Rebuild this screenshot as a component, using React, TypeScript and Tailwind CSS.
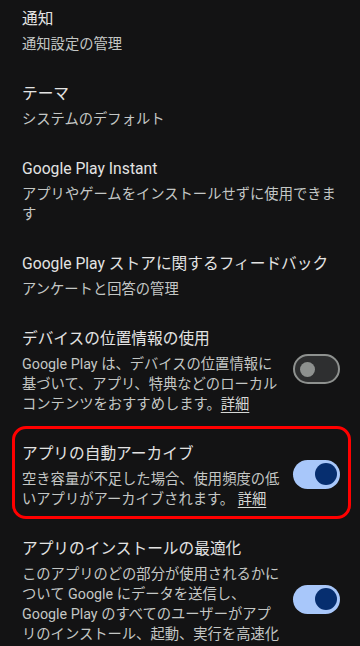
import React from "react";

interface SettingItem {
  title: string;
  subtitle: React.ReactNode;
  toggle?: "on" | "off";
  highlight?: boolean;
}

const FONT = { fontFamily: 'Roboto, "Noto Sans CJK JP", sans-serif' };

function Link({ children }: { children: React.ReactNode }) {
  return <span className="underline underline-offset-[3px] text-[#d6d8d6]">{children}</span>;
}

function Toggle({ on }: { on: boolean }) {
  if (on) {
    return (
      <div className="flex h-[29px] w-[47px] shrink-0 items-center justify-end rounded-full bg-[#a8c7fa] pr-[3px]">
        <div className="h-[22px] w-[22px] rounded-full bg-[#062e6f]" />
      </div>
    );
  }
  return (
    <div className="flex h-[30px] w-[47px] shrink-0 items-center rounded-full border-2 border-[#8e918f] bg-[#2e2f30] pl-[5px]">
      <div className="h-[15px] w-[15px] rounded-full bg-[#8e918f]" />
    </div>
  );
}

const ITEMS: SettingItem[] = [
  { title: "通知", subtitle: "通知設定の管理" },
  { title: "テーマ", subtitle: "システムのデフォルト" },
  { title: "Google Play Instant", subtitle: "アプリやゲームをインストールせずに使用できます" },
  { title: "Google Play ストアに関するフィードバック", subtitle: "アンケートと回答の管理" },
  {
    title: "デバイスの位置情報の使用",
    subtitle: (
      <>
        Google Play は、デバイスの位置情報に基づいて、アプリ、特典などのローカルコンテンツをおすすめします。<Link>詳細</Link>
      </>
    ),
    toggle: "off",
  },
  {
    title: "アプリの自動アーカイブ",
    subtitle: (
      <>
        空き容量が不足した場合、使用頻度の低いアプリがアーカイブされます。 <Link>詳細</Link>
      </>
    ),
    toggle: "on",
    highlight: true,
  },
  {
    title: "アプリのインストールの最適化",
    subtitle: (
      <>
        このアプリのどの部分が使用されるかについて Google にデータを送信し、Google Play のすべてのユーザーがアプリのインストール、起動、実行を高速化します。<Link>詳細</Link>
      </>
    ),
    toggle: "on",
  },
];

function Row({ item }: { item: SettingItem }) {
  return (
    <div className="relative flex items-center gap-3 pb-[14px] pl-[22px] pr-[20px] pt-[14px]">
      <div className="min-w-0 flex-1">
        <div className="text-[15.7px] leading-[24px] text-[#e3e3e3]">{item.title}</div>
        <div className="mt-[3px] text-[14.3px] leading-[20px] text-[#c4c7c5]">{item.subtitle}</div>
      </div>
      {item.toggle && (
        <div className="-mt-[3px]">
          <Toggle on={item.toggle === "on"} />
        </div>
      )}
      {item.highlight && (
        <div className="pointer-events-none absolute bottom-[4px] left-[12px] right-[9px] top-[-2px] rounded-[14px] border-[3px] border-[#ff0000]" />
      )}
    </div>
  );
}

export default function App() {
  return (
    <div className="h-[646px] w-[360px] overflow-hidden bg-[#131314]" style={FONT}>
      <div className="-mt-[7px]">
        {ITEMS.map((item, i) => (
          <Row key={i} item={item} />
        ))}
      </div>
    </div>
  );
}
